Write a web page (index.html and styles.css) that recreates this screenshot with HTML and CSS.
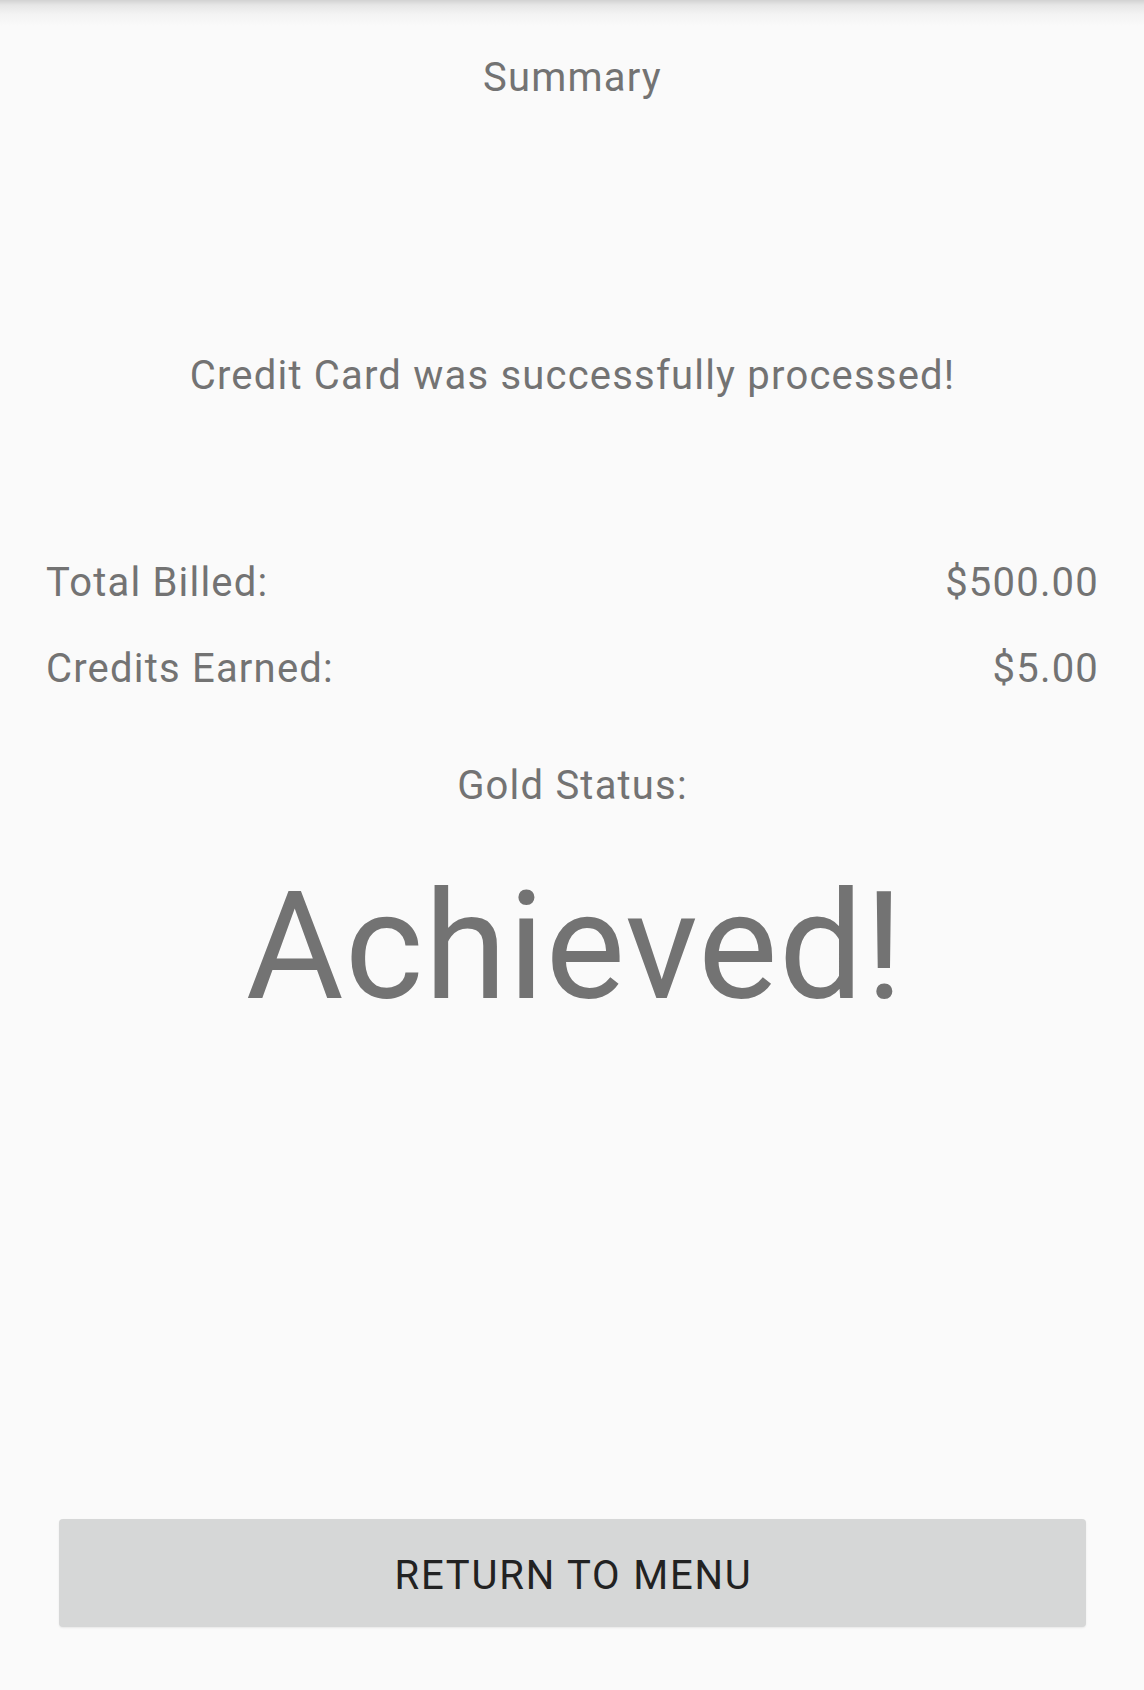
FILE: index.html
```html
<!DOCTYPE html>
<html>
<head>
<meta charset="utf-8">
<title>Summary</title>
<link rel="stylesheet" href="styles.css">
</head>
<body>
<div class="screen">
  <div class="title">Summary</div>
  <div class="message">Credit Card was successfully processed!</div>
  <div class="rows">
    <div class="row"><span>Total Billed:</span><span>$500.00</span></div>
    <div class="row"><span>Credits Earned:</span><span>$5.00</span></div>
  </div>
  <div class="gold">Gold Status:</div>
  <div class="achieved">Achieved!</div>
  <div class="button-wrap">
    <button class="menu-btn">RETURN TO MENU</button>
  </div>
</div>
</body>
</html>
```
FILE: styles.css
```css
html, body {
  margin: 0;
  padding: 0;
}
body {
  background: linear-gradient(to bottom, #d2d2d2 0px, #e6e6e6 5px, #f3f3f3 14px, #fafafa 26px) no-repeat, #fafafa;
  background-size: 100% 30px;
  background-color: #fafafa;
  font-family: Roboto, "Liberation Sans", sans-serif;
  color: #737373;
  width: 1144px;
  height: 1690px;
  overflow: hidden;
}
.screen {
  display: flex;
  flex-direction: column;
  padding: 55px 45px 0 46px;
}
.title, .message, .gold {
  text-align: center;
  font-size: 40px;
  line-height: 46px;
  letter-spacing: 1.2px;
}
.message {
  margin-top: 252px;
}
.rows {
  margin-top: 161px;
  display: flex;
  flex-direction: column;
  gap: 40px;
}
.row {
  display: flex;
  justify-content: space-between;
  font-size: 40px;
  line-height: 46px;
  letter-spacing: 1.2px;
}
.gold {
  margin-top: 71px;
}
.achieved {
  margin-top: 51px;
  padding-left: 5px;
  text-align: center;
  font-size: 150px;
  line-height: 175px;
  letter-spacing: 1.1px;
}
.button-wrap {
  margin-top: 484px;
  padding: 0 13px 0 13px;
}
.menu-btn {
  display: block;
  width: 100%;
  height: 108px;
  border: none;
  border-radius: 4px;
  background: #d6d7d7;
  color: #222222;
  font-family: Roboto, "Liberation Sans", sans-serif;
  font-size: 40px;
  letter-spacing: 1.8px;
  padding: 5px 0 0 2px;
  box-shadow: 0 1px 2px rgba(0,0,0,0.08);
}
```
